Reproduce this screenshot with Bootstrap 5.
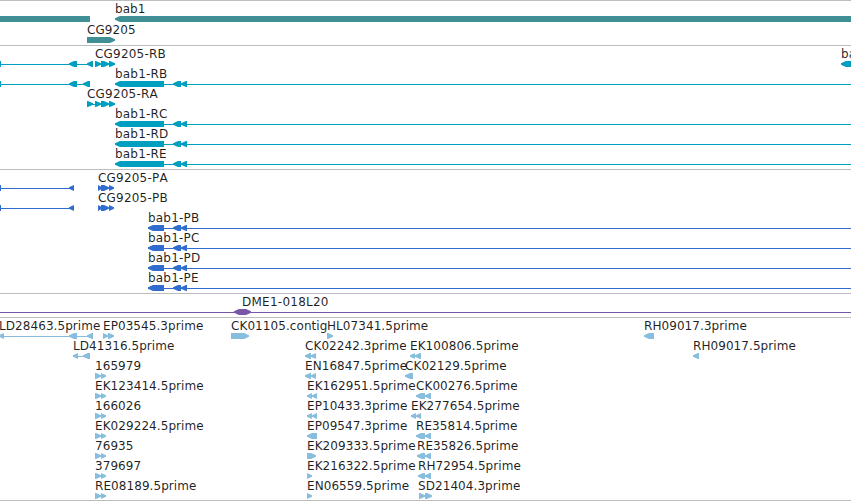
<!DOCTYPE html>
<html lang="en">
<head>
<meta charset="utf-8">
<meta name="viewport" content="width=device-width, initial-scale=1">
<title>bab1 region</title>
<link href="https://cdn.jsdelivr.net/npm/bootstrap@5.3.0/dist/css/bootstrap.min.css" rel="stylesheet">
<style>
  body { font-family: "DejaVu Sans", sans-serif; font-size: 12px; }
  .browser { width: 851px; height: 501px; border-bottom: 1px solid #bdbdbd; }
  .track { border-top: 1px solid #bdbdbd; padding-bottom: 3px; }
  .lane { height: 20px; width: 851px; overflow: visible; }
  .lane text { fill: #000; fill-opacity: .88; white-space: pre; font-kerning: none; letter-spacing: .07px; }
  .track-gene { color: #3f8f94; padding-bottom: 2px; }
  .lane path { fill: currentColor; }
  .track-gene .lane { height: 21px; }
  .track-mrna { color: #009fbf; }
  .track-cds { color: #316dcf; }
  .track-mrna text, .track-cds text { letter-spacing: .2px; }
  .track-bac { color: #7857a8; }
  .track-bac text { letter-spacing: .25px; }
  .track-est { color: #87bddd; padding-bottom: 2px; }
</style>
<script src="https://cdn.jsdelivr.net/npm/bootstrap@5.3.0/dist/js/bootstrap.bundle.min.js"></script>
</head>
<body class="bg-white m-0 overflow-hidden">
<main class="browser d-flex flex-column overflow-hidden" id="browser"></main>
<script>
// Feature: [label, label x, "parts"]; parts are kind:start-end where
// L/R = arrow, B = block, D = double-headed arrow, I = intron line.
const bab = n => [n, 115, 'I:115-851 L:115-164 L:173-181 L:181-187'];
const babP = n => [n, 148, 'I:148-851 L:148-164 L:173-181 L:181-187'];
const left = 'I:0-74 B:0-1 L:69-74';
const pep = n => [[n, 98, left + ' R:98-102 R:101-109 R:109-114']];
const pair = n => [n, 95, 'R:95-101 R:101-106'];
const tracks = [
  ['gene', [
    [['', 0, 'B:0-90'], ['bab1', 115, 'L:115-851']],
    [['CG9205', 87, 'R:87-115']]]],
  ['mrna', [
    [['CG9205-RB', 95, 'I:0-93 B:0-1 L:69-77 L:87-93 I:95-115 R:95-101 R:101-109 R:109-115'], ['bab1-RA', 841, 'L:841-860']],
    [['', 0, 'I:0-90 B:0-1 L:69-77 L:83-90'], bab('bab1-RB')],
    [['CG9205-RA', 87, 'I:87-115 R:87-93 R:95-101 R:101-109 R:109-115']],
    [bab('bab1-RC')], [bab('bab1-RD')], [bab('bab1-RE')]]],
  ['cds', [pep('CG9205-PA'), pep('CG9205-PB'),
    [babP('bab1-PB')], [babP('bab1-PC')], [babP('bab1-PD')], [babP('bab1-PE')]]],
  ['bac', [[['DME1-018L20', 242, 'I:0-851 D:234-251']]]],
  ['est', [
    [['LD28463.5prime', -1, 'I:0-93 L:-1-4 L:69-77 L:87-93'], ['EP03545.3prime', 103, 'R:103-108 R:108-114'],
     ['CK01105.contig', 231, 'R:231-249'], ['HL07341.5prime', 327, 'R:327-333'], ['RH09017.3prime', 644, 'L:644-654']],
    [['LD41316.5prime', 73, 'I:73-90 L:73-78 L:83-90'], ['CK02242.3prime', 305, 'L:305-311 L:311-316'],
     ['EK100806.5prime', 410, 'L:410-415 L:415-421'], ['RH09017.5prime', 693, 'L:693-699']],
    [pair('165979'), ['EN16847.5prime', 305, 'L:305-311 L:311-316'], ['CK02129.5prime', 405, 'L:405-413']],
    [pair('EK123414.5prime'), ['EK162951.5prime', 307, 'L:307-312 L:312-317'], ['CK00276.5prime', 416, 'L:416-425 L:425-431']],
    [pair('166026'), ['EP10433.3prime', 307, 'L:307-312 L:312-317'], ['EK277654.5prime', 411, 'L:411-416 L:416-421']],
    [pair('EK029224.5prime'), ['EP09547.3prime', 307, 'L:307-317'], ['RE35814.5prime', 416, 'L:416-425 L:425-431']],
    [pair('76935'), ['EK209333.5prime', 307, 'R:307-316'], ['RE35826.5prime', 417, 'L:417-425 L:425-431']],
    [pair('379697'), ['EK216322.5prime', 307, 'R:307-312'], ['RH72954.5prime', 418, 'L:418-425 L:425-431']],
    [pair('RE08189.5prime'), ['EN06559.5prime', 307, 'R:307-312'], ['SD21404.3prime', 418, 'R:419-425 R:425-432']]]]
];
const TOP = 15, MID = 18, BOT = 21, TIP = 0.8;
function shape(part) {
  const [, kind, s, e] = part.match(/^(\w):(-?\d+)-(\d+)$/);
  const a = +s, b = +e, h = Math.min(5, b - a);
  switch (kind) {
    case 'I': return `M${a} ${MID}H${b}v1H${a}z`;
    case 'B': return `M${a} ${TOP}H${b}V${BOT}H${a}z`;
    case 'L': return `M${a} ${MID - TIP}L${a + h} ${TOP}H${b}V${BOT}H${a + h}L${a} ${MID + TIP}z`;
    case 'R': return `M${b} ${MID - TIP}L${b - h} ${TOP}H${a}V${BOT}H${b - h}L${b} ${MID + TIP}z`;
    case 'D': return `M${a} ${MID - TIP}L${a + h} ${TOP}H${b - h}L${b} ${MID - TIP}V${MID + TIP}L${b - h} ${BOT}H${a + h}L${a} ${MID + TIP}z`;
  }
}
document.getElementById('browser').innerHTML = tracks.map(([kind, lanes]) =>
  `<section class="track track-${kind} d-flex flex-column flex-shrink-0">` + lanes.map(lane =>
    `<svg class="lane d-block flex-shrink-0">` + lane.map(([label, x, parts]) =>
      parts.split(' ').map(p => `<path d="${shape(p)}"/>`).join('') +
      (label ? `<text x="${x}" y="12">${label}</text>` : '')).join('') + '</svg>').join('') +
  '</section>').join('');
</script>
</body>
</html>
